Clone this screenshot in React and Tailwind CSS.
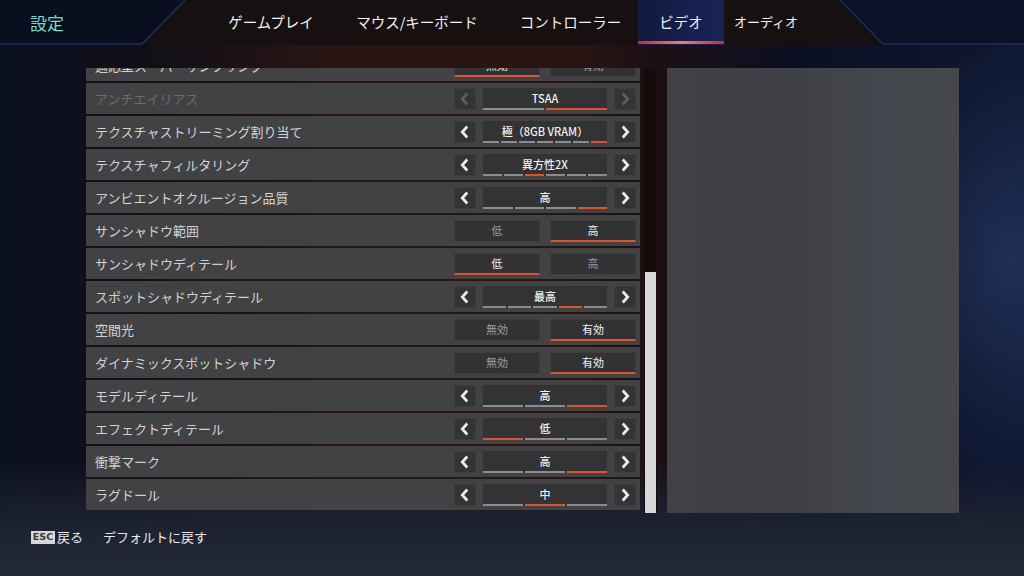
import React from 'react';

const tabs = [
  { label: 'ゲームプレイ', w: 'w-[120px]' },
  { label: 'マウス/キーボード', w: 'w-[172px]' },
  { label: 'コントローラー', w: 'w-[135px]' },
  { label: 'ビデオ', w: 'w-[86px]', active: true },
  { label: 'オーディオ', w: 'w-[84px]', small: true },
];

const rows = [
  { label: '適応型スーパーサンプリング', type: 'toggle', options: ['無効', '有効'], selected: 0 },
  { label: 'アンチエイリアス', type: 'select', value: 'TSAA', steps: 2, selected: 1, disabled: true },
  { label: 'テクスチャストリーミング割り当て', type: 'select', value: '極（8GB VRAM）', steps: 7, selected: 6 },
  { label: 'テクスチャフィルタリング', type: 'select', value: '異方性2X', steps: 6, selected: 2 },
  { label: 'アンビエントオクルージョン品質', type: 'select', value: '高', steps: 4, selected: 3 },
  { label: 'サンシャドウ範囲', type: 'toggle', options: ['低', '高'], selected: 1 },
  { label: 'サンシャドウディテール', type: 'toggle', options: ['低', '高'], selected: 0 },
  { label: 'スポットシャドウディテール', type: 'select', value: '最高', steps: 5, selected: 3 },
  { label: '空間光', type: 'toggle', options: ['無効', '有効'], selected: 1 },
  { label: 'ダイナミックスポットシャドウ', type: 'toggle', options: ['無効', '有効'], selected: 1 },
  { label: 'モデルディテール', type: 'select', value: '高', steps: 3, selected: 2 },
  { label: 'エフェクトディテール', type: 'select', value: '低', steps: 3, selected: 0 },
  { label: '衝撃マーク', type: 'select', value: '高', steps: 3, selected: 2 },
  { label: 'ラグドール', type: 'select', value: '中', steps: 3, selected: 1 },
];

function Arrow({ dir, disabled }) {
  return (
    <div className="w-[22px] h-[22px] bg-[#343436] border border-[#3d3d40] flex items-center justify-center">
      <svg width="22" height="22" viewBox="0 0 22 22">
        <polyline
          points={dir === 'left' ? '13.5,5 8,11 13.5,17' : '8.5,5 14,11 8.5,17'}
          fill="none"
          stroke={disabled ? '#5e5e61' : '#ececec'}
          strokeWidth="3"
          strokeLinecap="butt"
          strokeLinejoin="miter"
        />
      </svg>
    </div>
  );
}

function Select({ row }) {
  return (
    <div className="flex items-center gap-[7px]">
      <Arrow dir="left" disabled={row.disabled} />
      <div className="w-[124px] h-[22px] bg-[#333335] flex flex-col">
        <div className="flex-1 flex items-center justify-center text-[11px] font-medium text-[#f0f0f0] leading-none pt-[1px]">
          {row.value}
        </div>
        <div className="flex gap-[2px] h-[2px]">
          {Array.from({ length: row.steps }).map((_, i) => (
            <div key={i} className={`flex-1 ${i === row.selected ? 'bg-[#dc542f]' : 'bg-[#8c8c8e]'}`} />
          ))}
        </div>
      </div>
      <Arrow dir="right" disabled={row.disabled} />
    </div>
  );
}

function Toggle({ row }) {
  return (
    <div className="flex items-center gap-[10px]">
      {row.options.map((opt, i) => {
        const on = i === row.selected;
        return (
          <div
            key={opt}
            className={`w-[86px] h-[22px] bg-[#323234] border border-[#3e3e41] flex items-center justify-center text-[11px] leading-none ${
              on ? 'text-[#f0f0f0] border-b-2 border-b-[#dc542f]' : 'text-[#9a9a9c]'
            }`}
          >
            {opt}
          </div>
        );
      })}
    </div>
  );
}

export default function App() {
  return (
    <div className="w-[1024px] h-[576px] overflow-hidden flex flex-col font-['Noto_Sans_CJK_JP','Noto_Sans',sans-serif] bg-[radial-gradient(ellipse_140px_220px_at_1010px_260px,rgba(50,75,130,0.45),transparent),linear-gradient(180deg,rgba(0,0,0,0)_0%,rgba(0,0,0,0)_80%,#1d2231_91%,#252a39_100%),linear-gradient(90deg,#0b1020_0%,#100f18_14%,#2a1513_33%,#2b1512_55%,#1c1015_64%,#0b0f22_78%,#0f1832_100%)]">
      {/* Top bar */}
      <header className="relative h-[45px] shrink-0 flex items-center bg-[#161010]">
        <svg className="absolute inset-0" width="1024" height="45" viewBox="0 0 1024 45">
          <polygon points="0,0 185,0 142,44 0,44" fill="#0a0f1f" />
          <polyline points="185,0 142,44 0,44" fill="none" stroke="#1f2c66" strokeWidth="1.5" />
          <polygon points="840,0 1024,0 1024,44 883,44" fill="#0b1127" />
          <polyline points="840,0 883,44 1024,44" fill="none" stroke="#1f2c66" strokeWidth="1.5" />
        </svg>
        <div className="relative w-[211px] pl-[30px] text-[17px] text-[#7adcc8] leading-none">設定</div>
        {tabs.map((t) => (
          <div
            key={t.label}
            className={`relative ${t.w} h-[45px] flex items-center justify-center text-[#f2f2f2] ${
              t.small ? 'text-[13px]' : 'text-[14.5px]'
            } ${t.active ? 'bg-[linear-gradient(90deg,#121a3d,#1a2358)]' : ''}`}
          >
            <span className="-mt-[2px]">{t.label}</span>
            {t.active && (
              <div className="absolute left-0 right-0 bottom-[1px] h-[3px] bg-[linear-gradient(90deg,#c22832,#f27a7a_50%,#c22832)]" />
            )}
          </div>
        ))}
      </header>

      {/* Content */}
      <div className="flex pl-[86px] pt-[23px]">
        <div className="w-[554px] h-[445px] overflow-hidden">
          <div className="-mt-[18px] flex flex-col gap-[2px]">
            {rows.map((row) => (
              <div key={row.label} className="h-[31px] bg-[#424244] flex items-center justify-between">
                <span className={`pl-[9px] text-[13px] leading-none ${row.disabled ? 'text-[#6c6c6e]' : 'text-[#d2d2d2]'}`}>
                  {row.label}
                </span>
                <div className="mr-[4px] w-[183px] flex justify-end">
                  {row.type === 'select' ? <Select row={row} /> : <Toggle row={row} />}
                </div>
              </div>
            ))}
          </div>
        </div>
        <div className="ml-[4px] w-[13px] h-[445px] bg-[#150c0c] flex flex-col justify-end">
          <div className="h-[241px] mx-[1px] bg-[#d8d8d8]" />
        </div>
        <div className="ml-[10px] w-[292px] h-[445px] bg-[linear-gradient(90deg,#424245_0%,#3f4045_40%,#44474d_75%,#45474b_100%)]" />
      </div>

      {/* Footer */}
      <footer className="mt-[17px] h-[14px] flex items-center pl-[31px] text-[13px] text-[#e8e8e8] leading-none">
        <span className="w-[24px] h-[13px] bg-[#d6d6d6] text-[#3a3a3a] text-[9.5px] font-bold flex items-center justify-center font-['DejaVu_Sans',sans-serif]">ESC</span>
        <span className="ml-[2px] -mt-[1px]">戻る</span>
        <span className="ml-[20px] -mt-[1px]">デフォルトに戻す</span>
      </footer>
    </div>
  );
}
